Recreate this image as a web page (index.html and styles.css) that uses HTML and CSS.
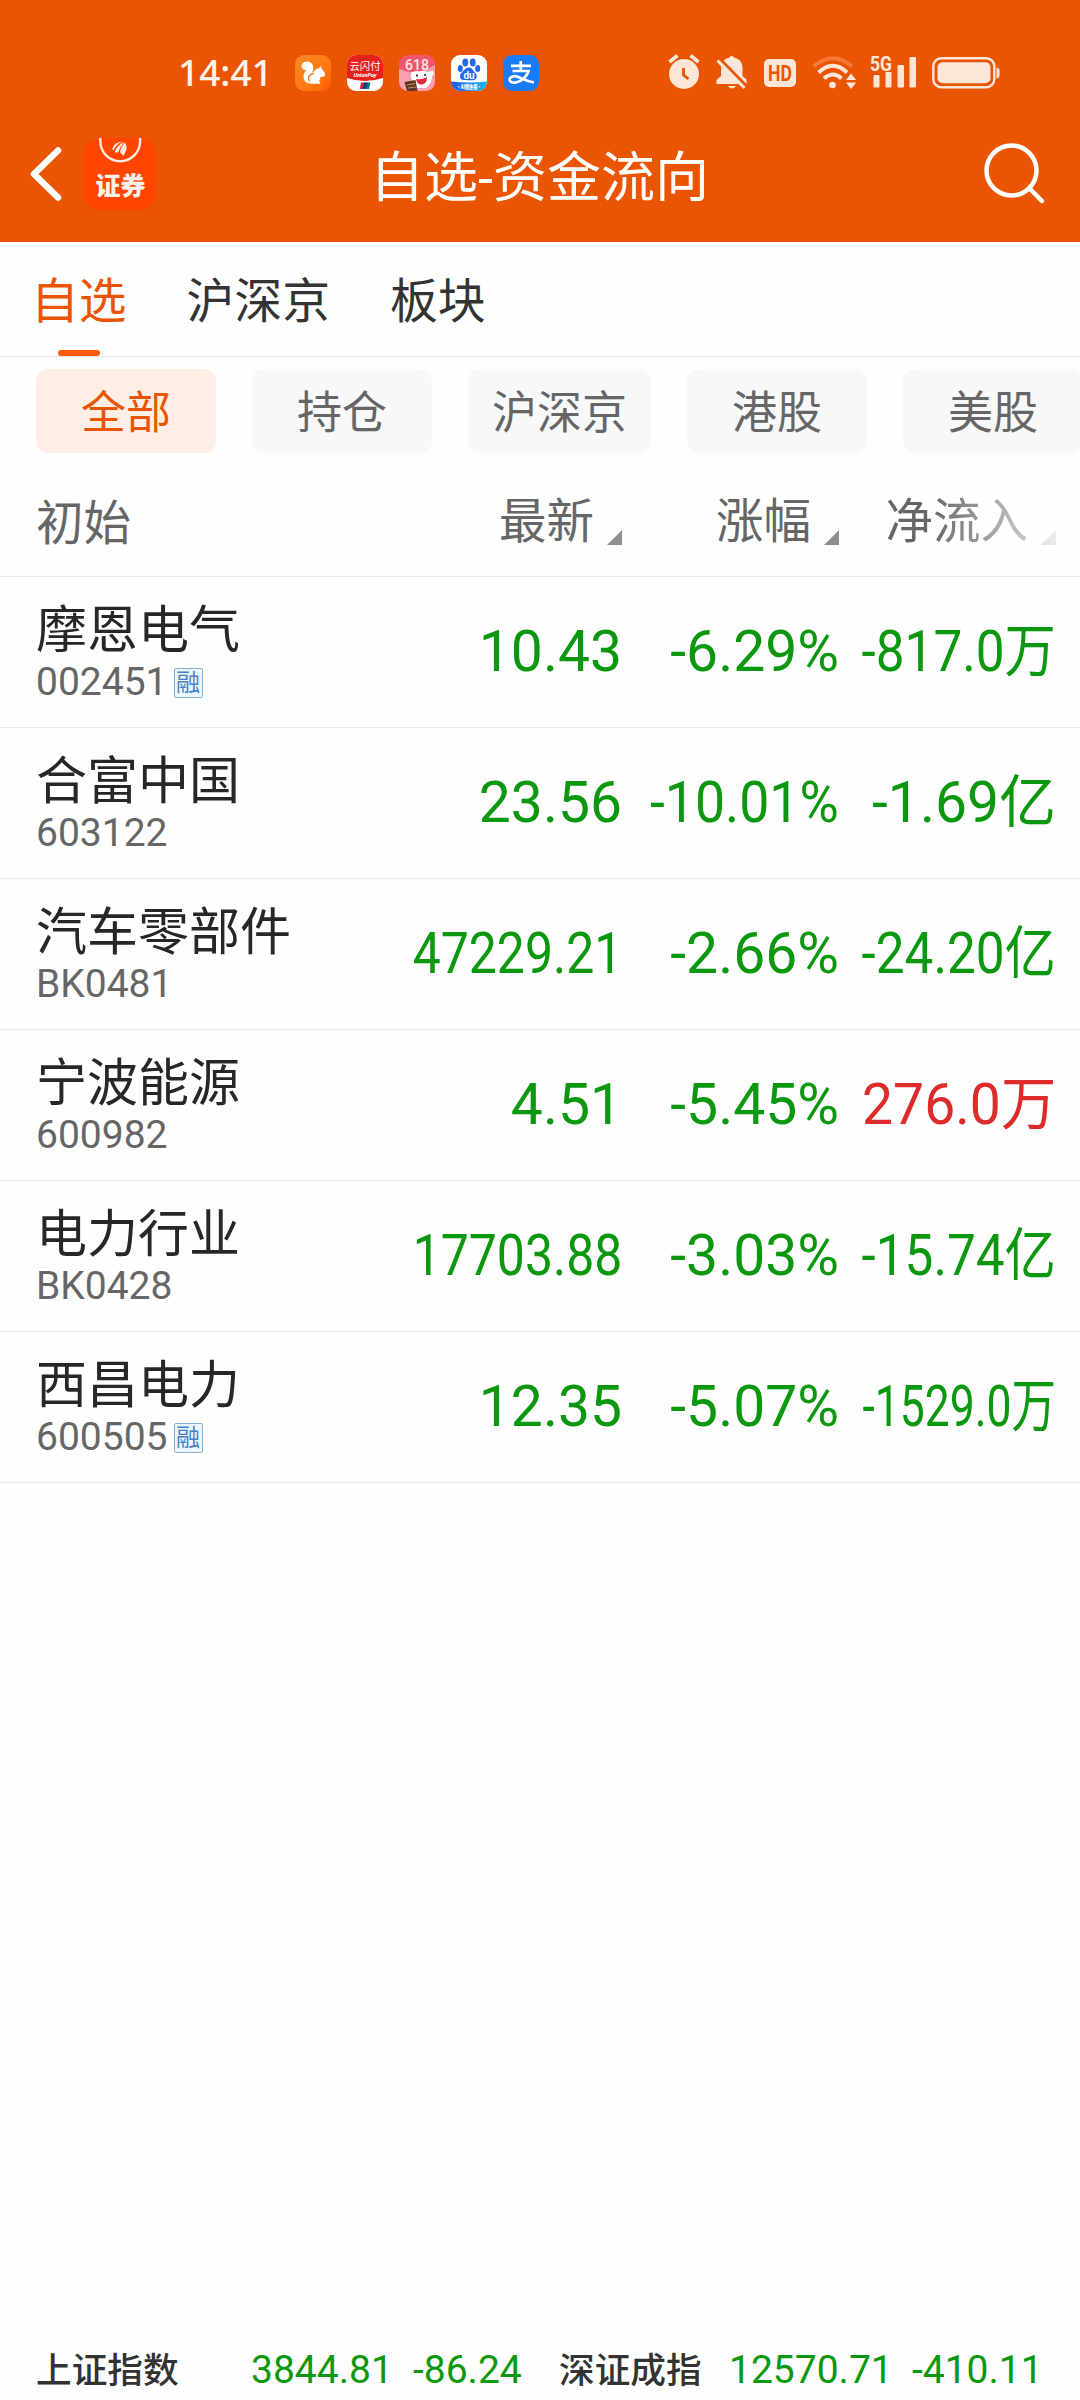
FILE: index.html
```html
<!DOCTYPE html>
<html lang="zh-CN">
<head>
<meta charset="utf-8">
<title>自选-资金流向</title>
<link rel="stylesheet" href="styles.css">
</head>
<body>
<div class="app">
  <header class="top">
    <div class="status">
      <span class="clock">14:41</span>
      <div class="notif">
        <svg class="app-ic" viewBox="0 0 36 36"><defs><linearGradient id="uc" x1="0" y1="0" x2="1" y2="1"><stop offset="0" stop-color="#f9862a"/><stop offset=".6" stop-color="#ff7a10"/><stop offset="1" stop-color="#ff5a00"/></linearGradient></defs><rect width="36" height="36" rx="9" fill="url(#uc)"/><path fill="#fff" d="M12.500 6.500C8 6.300 5.800 9.500 6.800 12.500c.8 2.300 3.200 2.800 4.700 2.500-2.500 2.500-3.700 6-2.600 9 1.200 3.300 4 4.800 7.600 4.800h7.500c2 0 1.800-2-.2-2.500 1.500-1.300 1.700-2.800 1.400-4.300 2.300.3 4.800-.5 5-2.500 0-2-2-4-3.600-5.800l-.9-2.800-1.900 2.300c-3 .5-5.800 3.200-7.300 6-1 2-2 2.500-3 2.700 2-2.400 4.800-5 4.800-8.900 0-3.800-2.300-6.300-5.800-6.500z"/><path fill="none" stroke="#ff7a10" stroke-width="1.300" d="M14.500 26.500c-2.500-3.500 0-8.500 4.500-7.500"/></svg>
        <svg class="app-ic" viewBox="0 0 36 36"><defs><clipPath id="r1"><rect width="36" height="36" rx="9"/></clipPath></defs><g clip-path="url(#r1)"><rect width="36" height="36" fill="#fff"/><path fill="#e8211d" d="M0 0h36v23q-18 6-36 0z"/><text x="18" y="14.500" text-anchor="middle" font-size="10.300" class="svg-cn" fill="#fff">云闪付</text><text x="18" y="21.500" text-anchor="middle" font-size="5.600" class="svg-en it" fill="#fff">UnionPay</text><path fill="#d3283a" d="M14 27.500h5l-1.500 6.500h-4.800z"/><path fill="#1d3f78" d="M17 27.500h4.500L20 34h-4.500z"/><path fill="#11767b" d="M20.500 27.500h3L22 34h-3z"/></g></svg>
        <svg class="app-ic" viewBox="0 0 36 36"><defs><clipPath id="r2"><rect width="36" height="36" rx="9"/></clipPath></defs><g clip-path="url(#r2)"><rect width="36" height="36" fill="#f3566f"/><path fill="#f9a0b0" d="M0 14q18 8 36-4v26H0z"/><text x="18" y="14.800" text-anchor="middle" font-size="15.500" textLength="24" lengthAdjust="spacingAndGlyphs" class="svg-en mid" fill="#ffe9e4">618</text><path fill="#fff" d="M12 18q4-3 8-1.500 4-1.500 8 .5l6-1q2 3-1 5 0 7-6 12H14l1-5q-4-5-3-10z"/><path fill="#e32b36" d="M17 24q6 1 11-2 0 7-5 7.500t-6-5.500z"/><circle cx="18" cy="20.500" r="1.100" fill="#222"/><circle cx="26" cy="20" r="1.100" fill="#222"/><path fill="#5d3520" d="M5.500 27l11-2 2 11H8z"/><path stroke="#c79a4c" stroke-width="1" d="M8 30l8-1.500M9 33l8-1"/></g></svg>
        <svg class="app-ic" viewBox="0 0 36 36"><defs><clipPath id="r3"><rect width="36" height="36" rx="9"/></clipPath><linearGradient id="bd"><stop offset="0" stop-color="#1c58f2"/><stop offset="1" stop-color="#19b8e6"/></linearGradient></defs><g clip-path="url(#r3)"><rect width="36" height="36" fill="#fff"/><g fill="#2468e8"><ellipse cx="14.300" cy="7.500" rx="2.900" ry="4"/><ellipse cx="21.800" cy="7.500" rx="2.900" ry="4"/><ellipse cx="9.300" cy="13.500" rx="2.500" ry="3.500"/><ellipse cx="26.700" cy="13.500" rx="2.500" ry="3.500"/><path d="M18 12.500c3 0 4 3 6 5s3 6.500-1 7.500-7-.5-10 0-5.500-3.500-3-6.500 5-6 8-6z"/></g><text x="18" y="23.500" text-anchor="middle" font-size="10" class="svg-en" fill="#fff">du</text><path fill="url(#bd)" d="M0 26.500q18 2 36 0V36H0z"/><text x="18" y="34" text-anchor="middle" font-size="6" textLength="25" lengthAdjust="spacingAndGlyphs" class="svg-cn b" fill="#fff">·AI搜热榜·</text></g></svg>
        <svg class="app-ic" viewBox="0 0 36 36"><rect width="36" height="36" rx="9" fill="#1a7af8"/><path fill="none" stroke="#fff" stroke-width="2.700" d="M17.800 6v9M8 10.800h20M9.500 16h16c-1.500 5-6 10-12 11.300-5 .9-7.500-1-6.800-3.500.8-2.600 4.500-3.500 9.300-1.500 4 1.700 8 4.200 15 5.200"/></svg>
      </div>
      <div class="sys">
        <svg class="alarm" viewBox="0 0 32 36" fill="#fde5d8"><circle cx="16" cy="20" r="15"/><path stroke="#fde5d8" stroke-width="3.600" d="M1.500 8l8-6.500M30.500 8l-8-6.500"/><path fill="none" stroke="#ea5504" stroke-width="2.800" d="M15.500 14v7l5 4"/></svg>
        <svg class="bell" viewBox="0 0 32 34" fill="#fde5d8"><path d="M13.500 2.500q2-3.500 4.500 0 8 1.500 8.500 9.500v9l4 3.500v4.500H.5V25l4.500-4V12q.5-8 8.500-9.500zM12 31h8q-4 5-8 0z"/><path stroke="#ea5504" stroke-width="3" d="M3.500 3.500L30.500 31"/><path stroke="#fde5d8" stroke-width="3" d="M1.500 5.500L28.500 33"/></svg>
        <svg class="hd" viewBox="0 0 32 28"><rect width="32" height="28" rx="5" fill="#fde5d8"/><text x="16" y="22" text-anchor="middle" font-size="22" textLength="24" lengthAdjust="spacingAndGlyphs" class="svg-en" fill="#ea5504">HD</text></svg>
        <svg class="wifi" viewBox="0 0 44 34" fill="none"><path stroke="#f57836" stroke-width="4" d="M1.500 11.500Q21 -5 40 11.500"/><path stroke="#fde5d8" stroke-width="4" d="M6.500 17.500q14.500-13.500 28.500 0M12 23.500q9-8 17.500 0"/><circle cx="20.500" cy="30" r="3.300" fill="#fde5d8"/><path fill="#fde5d8" d="M39 18.500l5.200 6.500H34zM39 34l5.200-6.500H34z"/></svg>
        <svg class="signal" viewBox="0 0 46 34" fill="#fde5d8"><text x="0" y="15.500" font-size="21" textLength="22" lengthAdjust="spacingAndGlyphs" class="svg-en">5G</text><rect x="3.500" y="20" width="6" height="12.500" rx="1"/><rect x="15.500" y="17" width="6" height="15.500" rx="1"/><rect x="27.500" y="10" width="6.500" height="22.500" rx="1"/><rect x="39.500" y="2" width="6.500" height="30.500" rx="1"/></svg>
        <svg class="battery" viewBox="0 0 68 32"><rect x="1.300" y="1.300" width="61" height="29" rx="8" fill="none" stroke="#fde5d8" stroke-width="2.400"/><rect x="5.500" y="5.200" width="53" height="21" rx="5" fill="#fde5d8"/><path fill="#fde5d8" d="M64.500 10.500q3 .5 3 3v5q0 2.500-3 3z"/></svg>
      </div>
    </div>
    <div class="nav">
      <svg class="back" viewBox="0 0 32 54"><path fill="none" stroke="#fff" stroke-width="6.500" stroke-linecap="round" stroke-linejoin="round" d="M28 3.500L4 27 28 50.500"/></svg>
      <svg class="logo" viewBox="0 0 72 72"><rect width="72" height="72" rx="16" fill="#ff4500"/><path fill="none" stroke="#ffe9e0" stroke-width="2.400" d="M16.300 0v3.300a19.900 19.900 0 0 0 39.800 0V0"/><g fill="#ffe9e0"><path d="M28 11.500Q30 4 38.500 3.500 31 7 30 12z"/><path d="M30.500 14.500Q33 7 40 4 36 9 34 14.500z"/><path d="M36 14Q37 8 41 4.500q2 3 1.500 7L39.500 18z"/></g><text x="36.500" y="56.500" text-anchor="middle" font-size="25" class="svg-cn b" fill="#fff2ec">证券</text></svg>
      <h1 class="title">自选-资金流向</h1>
      <svg class="search" viewBox="0 0 62 62"><g fill="none" stroke="#fff" stroke-width="4.500"><circle cx="27.500" cy="27.500" r="25"/><path stroke-linecap="round" d="M46 46l12 12"/></g></svg>
    </div>
  </header>

  <nav class="tabs">
    <span class="tab on">自选</span>
    <span class="tab">沪深京</span>
    <span class="tab">板块</span>
  </nav>

  <div class="chips">
    <span class="chip on">全部</span>
    <span class="chip">持仓</span>
    <span class="chip wide">沪深京</span>
    <span class="chip">港股</span>
    <span class="chip">美股</span>
  </div>

  <div class="row head">
    <span class="c-name">初始</span>
    <span class="c-sort">最新<i class="tri"></i></span>
    <span class="c-sort">涨幅<i class="tri"></i></span>
    <span class="c-sort">净流入<i class="tri"></i></span>
  </div>

  <div class="row">
    <div class="c-name"><div class="name">摩恩电气</div><div class="code">002451<span class="badge">融</span></div></div>
    <span class="num">10.43</span><span class="num">-6.29%</span><span class="num" style="--fit:.9">-817.0万</span>
  </div>
  <div class="row">
    <div class="c-name"><div class="name">合富中国</div><div class="code">603122</div></div>
    <span class="num">23.56</span><span class="num" style="--fit:.94">-10.01%</span><span class="num">-1.69亿</span>
  </div>
  <div class="row">
    <div class="c-name"><div class="name">汽车零部件</div><div class="code">BK0481</div></div>
    <span class="num" style="--fit:.876">47229.21</span><span class="num">-2.66%</span><span class="num" style="--fit:.9">-24.20亿</span>
  </div>
  <div class="row">
    <div class="c-name"><div class="name">宁波能源</div><div class="code">600982</div></div>
    <span class="num">4.51</span><span class="num">-5.45%</span><span class="num up" style="--fit:.97">276.0万</span>
  </div>
  <div class="row">
    <div class="c-name"><div class="name">电力行业</div><div class="code">BK0428</div></div>
    <span class="num" style="--fit:.876">17703.88</span><span class="num">-3.03%</span><span class="num" style="--fit:.9">-15.74亿</span>
  </div>
  <div class="row">
    <div class="c-name"><div class="name">西昌电力</div><div class="code">600505<span class="badge">融</span></div></div>
    <span class="num">12.35</span><span class="num">-5.07%</span><span class="num" style="--fit:.78">-1529.0万</span>
  </div>

  <footer class="indices">
    <span class="idx-name">上证指数</span><span class="idx">3844.81</span><span class="idx">-86.24</span>
    <span class="idx-name">深证成指</span><span class="idx">12570.71</span><span class="idx">-410.11</span>
  </footer>
</div>
</body>
</html>
```
FILE: styles.css
```css
* { box-sizing: border-box; }
body {
  margin: 0;
  background: #fefefe;
  font-family: Roboto, "Noto Sans CJK SC", sans-serif;
  color: #272727;
}
svg { display: block; flex: none; overflow: visible; }
.svg-cn { font-family: "Noto Sans CJK SC", sans-serif; }
.svg-en { font-family: Roboto, sans-serif; font-weight: 700; }
.svg-en.mid { font-weight: 500; }
.it { font-style: italic; }
.b { font-weight: 900; }

.app {
  width: 1080px;
  height: 2400px;
  overflow: hidden;
  display: flex;
  flex-direction: column;
}

/* Header */
.top { height: 242px; flex: none; background: #ea5504; color: #fff; }
.status { height: 108px; padding: 37px 80px 0 178px; display: flex; }
.clock {
  width: 117px;
  font: 500 37px/70px "Noto Sans", sans-serif;
  color: #fff3ea;
}
.notif { display: flex; gap: 16px; padding-top: 18px; }
.app-ic { width: 36px; height: 36px; }
.sys { display: flex; margin-left: auto; padding-top: 18px; }
.alarm { width: 32px; height: 36px; margin-top: -1px; }
.bell { width: 32px; height: 34px; margin-left: 16px; }
.hd { width: 32px; height: 28px; margin: 4px 0 0 16px; }
.wifi { width: 44px; height: 34px; margin-left: 16px; }
.signal { width: 46px; height: 34px; margin-left: 14px; }
.battery { width: 68px; height: 32px; margin: 2px 0 0 16px; }

.nav {
  height: 134px;
  padding: 0 34px 0 30px;
  display: grid;
  grid-template-columns: 54px 72px 1fr 62px;
}
.back { width: 32px; height: 54px; margin-top: 39px; }
.logo { width: 72px; height: 72px; margin-top: 30px; }
.title {
  margin: 31px 0 0;
  padding-right: 61px;
  text-align: center;
  font-weight: 400;
  font-size: 54px;
  line-height: 80px;
  white-space: nowrap;
}
.search { width: 62px; height: 62px; margin-top: 35px; }

/* Tabs */
.tabs {
  height: 115px;
  flex: none;
  padding-left: 31px;
  display: flex;
  gap: 60px;
  border-bottom: 1px solid #e3e3e3;
  font-size: 47.800px;
  line-height: 120px;
  color: #333;
}
.tab { display: flex; flex-direction: column; height: 114px; }
.tab.on { color: #ea5504; }
.tab.on::after {
  content: "";
  width: 42px;
  height: 6px;
  margin: -12px auto 0;
  border-radius: 3px;
  background: #fa5a0a;
}

/* Filters */
.chips { display: flex; flex: none; gap: 36px; padding: 12px 0 0 36px; }
.chip {
  flex: none;
  width: 180px;
  height: 84px;
  border-radius: 12px;
  background: #f7f8fa;
  color: #666;
  font-size: 45px;
  line-height: 90px;
  text-align: center;
}
.chip.wide { width: 183px; }
.chip.on { background: #ffeee6; color: #ea5504; }

/* Quotes */
.row {
  height: 151px;
  flex: none;
  padding: 0 24px 0 36px;
  display: grid;
  grid-template-columns: 1fr 230px 217px 217px;
  border-bottom: 1px solid #ebebeb;
}
.head { height: 124px; font-size: 47.500px; line-height: 70px; color: #666; padding-top: 36px; }
.c-sort { display: flex; justify-content: flex-end; white-space: nowrap; margin-top: -2px; }
.tri {
  width: 15px;
  height: 15px;
  margin: 43px 0 0 13px;
  background: #8e8e93;
  clip-path: polygon(100% 0, 100% 100%, 0 100%);
}
.head .c-sort:last-child {
  margin-right: -24px;
  padding-right: 24px;
  -webkit-mask-image: linear-gradient(to left, transparent 0, #000 150px);
  mask-image: linear-gradient(to left, transparent 0, #000 150px);
}
.name { margin-top: 17px; font-size: 51px; line-height: 74px; }
.code { display: flex; height: 46px; margin-top: -9px; font-size: 39px; line-height: 46px; color: #666; }
.badge {
  width: 29px;
  height: 30px;
  margin: 9px 0 0 6px;
  border: 1.500px solid #84aedb;
  border-radius: 2px;
  background: #edf6fd;
  color: #4484c8;
  font-size: 24px;
  line-height: 28px;
  text-align: center;
  display: flex;
  justify-content: center;
}
.num {
  justify-self: end;
  font-size: 57px;
  line-height: 150px;
  white-space: nowrap;
  color: #0b980e;
  transform: scaleX(var(--fit, 1));
  transform-origin: right;
}
.num.up { color: #dc2b2b; }

/* Index ticker */
.indices {
  margin-top: auto;
  flex: none;
  height: 60px;
  padding-left: 36px;
  display: grid;
  grid-template-columns: 215px 162px 146px 170px 183px 1fr;
  line-height: 60px;
}
.idx-name { font-size: 35.700px; font-weight: 500; line-height: 62px; color: #333; }
.idx { font-size: 39px; color: #0b980e; }
```
